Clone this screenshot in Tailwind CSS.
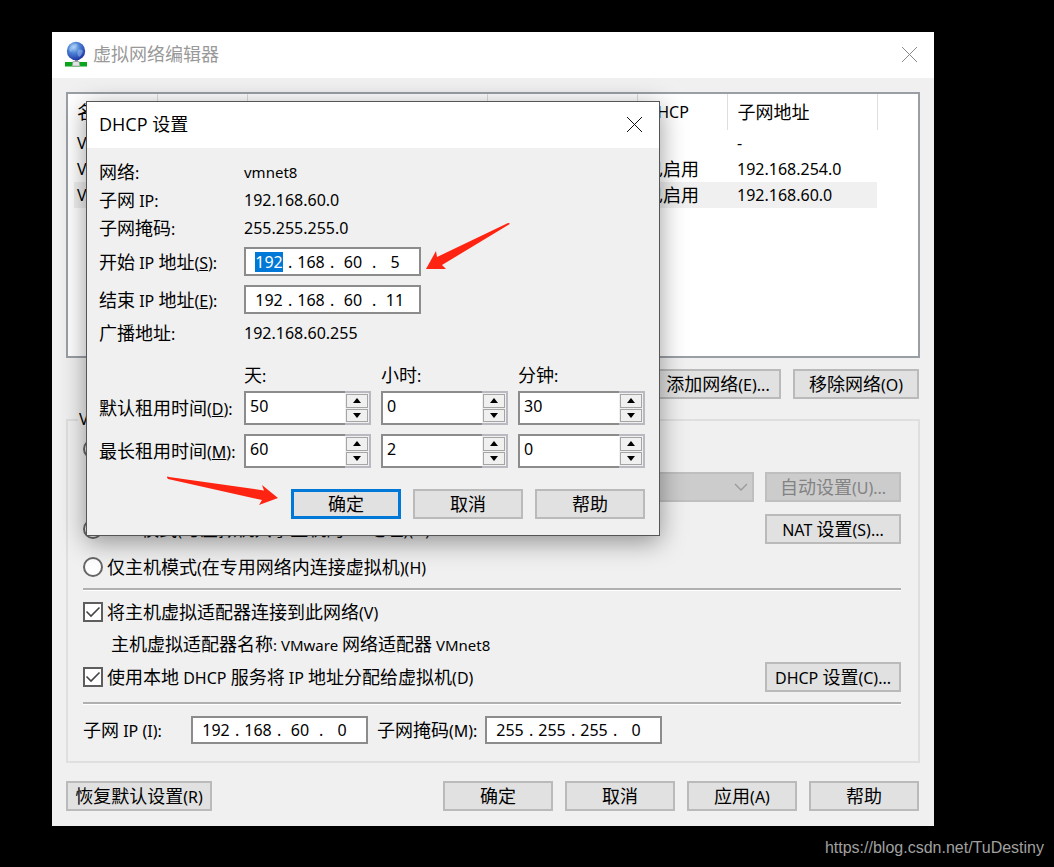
<!DOCTYPE html>
<html lang="zh-CN">
<head>
<meta charset="utf-8">
<meta name="viewport" content="width=device-width, initial-scale=1">
<title>虚拟网络编辑器</title>
<script src="https://cdn.jsdelivr.net/npm/@tailwindcss/browser@4"></script>
</head>
<body class="min-h-screen bg-black font-['Noto_Sans','Noto_Sans_CJK_SC',sans-serif] text-[18px] leading-[26px] text-black">
<div class="relative flex min-h-screen flex-col pt-8">

  <main class="mr-[120px] ml-[52px] bg-[#f0f0f0]">
    <header class="flex h-[46px] items-center bg-white pr-4 pb-0.5 pl-[13px]">
      <svg class="h-[26px] w-[22px]" viewBox="0 0 22 26" aria-hidden="true">
        <defs>
          <radialGradient id="globe" cx="0.38" cy="0.3" r="0.75">
            <stop offset="0" stop-color="#b4d4f6"/><stop offset="0.4" stop-color="#4f86d8"/><stop offset="1" stop-color="#1c2fa0"/>
          </radialGradient>
        </defs>
        <path d="M10 19h3v3h-3z" fill="#8b93a0"/>
        <path d="M0 21h22v4.500H0z" fill="#0aa51c"/>
        <path d="M8 20.500h6l1 4.500H7z" fill="#e3e3e3" stroke="#8d8d8d" stroke-width="0.600"/>
        <circle cx="11" cy="10" r="9.200" fill="url(#globe)"/>
        <path d="M4 8c2-4 5-5 8-5 1 2-1 3-3 4s-2 4-4 4zM13 9c2-1 4 0 5 1-1 3-2 5-4 6-2-2-2-5-1-7z" fill="#a9cbf3" opacity="0.450"/>
      </svg>
      <h1 class="ml-1.5 flex-1 text-[#999]">虚拟网络编辑器</h1>
      <button aria-label="关闭" class="size-[17px]">
        <svg viewBox="0 0 17 17" class="size-[17px]" stroke="#888" fill="none"><path d="M1 1l15 15M16 1L1 16"/></svg>
      </button>
    </header>

    <div class="px-[14px] pt-[14px] pb-[15px]">
      <section class="h-[266px] overflow-hidden border-2 border-[#9a9fa6] bg-white pl-1.5">
        <table class="w-[803px] table-fixed border-collapse text-left whitespace-nowrap">
          <colgroup><col class="w-[83px]"><col class="w-[90px]"><col class="w-[240px]"><col class="w-[150px]"><col class="w-[90px]"><col class="w-[150px]"></colgroup>
          <thead>
            <tr class="h-9">
              <th class="border-r border-[#dedede] p-0 pl-[3px] font-normal">名称</th>
              <th class="border-r border-[#dedede] p-0"></th>
              <th class="border-r border-[#dedede] p-0"></th>
              <th class="border-r border-[#dedede] p-0"></th>
              <th class="border-r border-[#dedede] p-0 pl-2 text-base font-normal">DHCP</th>
              <th class="border-r border-[#dedede] p-0 pl-2.5 font-normal">子网地址</th>
            </tr>
          </thead>
          <tbody>
            <tr class="h-[26px]">
              <td class="p-0 pl-[3px] text-base">VMnet0</td><td></td><td></td><td></td><td></td><td class="p-0 pl-2.5 text-base">-</td>
            </tr>
            <tr class="h-[26px]">
              <td class="p-0 pl-[3px] text-base">VMnet1</td><td></td><td></td><td></td><td class="p-0 pl-2">已启用</td><td class="p-0 pl-2.5 text-base">192.168.254.0</td>
            </tr>
            <tr class="h-[26px] bg-[#f0f0f0]">
              <td class="p-0 pl-[3px] text-base">VMnet8</td><td></td><td></td><td></td><td class="p-0 pl-2">已启用</td><td class="p-0 pl-2.5 text-base">192.168.60.0</td>
            </tr>
          </tbody>
        </table>
      </section>

      <div class="mt-[11px] flex justify-end gap-3 pr-px">
        <button class="h-[30px] w-[126px] border-2 border-[#bababa] bg-[#e1e1e1] whitespace-nowrap">添加网络<span class="text-base leading-6">(E)...</span></button>
        <button class="h-[30px] w-[126px] border-2 border-[#bababa] bg-[#e1e1e1] whitespace-nowrap">移除网络<span class="text-base leading-6">(O)</span></button>
      </div>

      <section class="relative mt-5 border-2 border-[#dfdfdf] pt-3 pr-[17px] pb-[17px] pl-[15px]">
        <h2 class="absolute -top-[14px] left-2.5 bg-[#f0f0f0] px-px text-base">VMnet</h2>

        <div class="flex h-8 items-center">
          <input type="radio" name="mode" aria-label="桥接模式" class="size-5 appearance-none rounded-full border-2 border-[#666] bg-white">
        </div>
        <div class="mt-[7px] flex h-[30px] items-center gap-[11px] pl-[160px]">
          <div class="relative flex-1">
            <select aria-label="已桥接至" disabled class="block h-[30px] w-full appearance-none border-2 border-[#bfbfbf] bg-[#ccc]"></select>
            <svg class="absolute top-[11px] right-1.5 h-2 w-[14px]" viewBox="0 0 14 8" fill="none" stroke="#9a9a9a" stroke-width="1.300"><path d="M1 1l6 6 6-6"/></svg>
          </div>
          <button disabled class="h-[30px] w-[136px] border-2 border-[#bfbfbf] bg-[#ccc] whitespace-nowrap text-[#838383]">自动设置<span class="text-base leading-6">(U)...</span></button>
        </div>
        <div class="mt-3 flex h-[30px] items-center justify-between">
          <label class="flex items-center gap-1 whitespace-nowrap">
            <input type="radio" name="mode" checked class="size-5 appearance-none rounded-full border-2 border-[#666] bg-white">
            <span><span class="text-base leading-6">NAT </span>模式<span class="text-base leading-6">(</span>与虚拟机共享主机的<span class="text-base leading-6"> IP </span>地址<span class="text-base leading-6">)(N)</span></span>
          </label>
          <button class="h-[30px] w-[136px] border-2 border-[#bababa] bg-[#e1e1e1] whitespace-nowrap"><span class="text-base leading-6">NAT </span>设置<span class="text-base leading-6">(S)...</span></button>
        </div>
        <label class="mt-2.5 flex h-[26px] items-center gap-1 whitespace-nowrap">
          <input type="radio" name="mode" class="size-5 appearance-none rounded-full border-2 border-[#666] bg-white">
          <span>仅主机模式<span class="text-base leading-6">(</span>在专用网络内连接虚拟机<span class="text-base leading-6">)(H)</span></span>
        </label>
        <hr class="mt-2 h-[3px] border-t-2 border-b border-t-[#b0b0b0] border-b-white">
        <label class="mt-2 flex h-[26px] items-center whitespace-nowrap">
          <span class="relative mr-1 block size-5">
            <input type="checkbox" checked class="block size-5 appearance-none border-2 border-[#5e5e5e] bg-white">
            <svg class="pointer-events-none absolute inset-0 size-5" viewBox="0 0 20 20" fill="none" stroke="#444" stroke-width="1.600"><path d="M3.500 9.500l4.500 4.500L16.500 5.500"/></svg>
          </span>
          <span>将主机虚拟适配器连接到此网络<span class="text-base leading-6">(V)</span></span>
        </label>
        <p class="mt-1.5 h-[26px] pl-7 whitespace-nowrap">主机虚拟适配器名称<span class="text-[15px] leading-6">: VMware </span>网络适配器<span class="text-[15px] leading-6"> VMnet8</span></p>
        <div class="mt-[5px] flex h-[30px] items-center justify-between">
          <label class="flex items-center whitespace-nowrap">
            <span class="relative mr-1 block size-5">
              <input type="checkbox" checked class="block size-5 appearance-none border-2 border-[#5e5e5e] bg-white">
              <svg class="pointer-events-none absolute inset-0 size-5" viewBox="0 0 20 20" fill="none" stroke="#444" stroke-width="1.600"><path d="M3.500 9.500l4.500 4.500L16.500 5.500"/></svg>
            </span>
            <span>使用本地<span class="text-base leading-6"> DHCP </span>服务将<span class="text-base leading-6"> IP </span>地址分配给虚拟机<span class="text-base leading-6">(D)</span></span>
          </label>
          <button class="h-[30px] w-[136px] border-2 border-[#bababa] bg-[#e1e1e1] whitespace-nowrap"><span class="text-base leading-6">DHCP </span>设置<span class="text-base leading-6">(C)...</span></button>
        </div>
        <hr class="mt-2.5 h-[3px] border-t-2 border-b border-t-[#b0b0b0] border-b-white">
        <div class="mt-[11px] flex h-[28px] items-center whitespace-nowrap">
          <label for="net1" class="w-[108px]">子网<span class="text-base leading-6"> IP (I):</span></label>
          <div class="flex h-[28px] w-[177px] items-center border-2 border-[#8c8c8c] bg-white pl-1 text-base leading-6">
            <input id="net1" value="192" class="w-[38px] text-center"><span class="w-1">.</span><input aria-label="子网 IP 2" value="168" class="w-[38px] text-center"><span class="w-1">.</span><input aria-label="子网 IP 3" value="60" class="w-[38px] text-center"><span class="w-1">.</span><input aria-label="子网 IP 4" value="0" class="w-[38px] text-center">
          </div>
          <label for="mask1" class="ml-[9px] w-[108px]">子网掩码<span class="text-base leading-6">(M):</span></label>
          <div class="flex h-[28px] w-[177px] items-center border-2 border-[#8c8c8c] bg-white pl-1 text-base leading-6">
            <input id="mask1" value="255" class="w-[38px] text-center"><span class="w-1">.</span><input aria-label="子网掩码 2" value="255" class="w-[38px] text-center"><span class="w-1">.</span><input aria-label="子网掩码 3" value="255" class="w-[38px] text-center"><span class="w-1">.</span><input aria-label="子网掩码 4" value="0" class="w-[38px] text-center">
          </div>
        </div>
      </section>

      <footer class="mt-[18px] flex gap-3 pr-px">
        <button class="mr-auto h-[30px] w-[146px] border-2 border-[#bababa] bg-[#e1e1e1] whitespace-nowrap">恢复默认设置<span class="text-base leading-6">(R)</span></button>
        <button class="h-[30px] w-[110px] border-2 border-[#bababa] bg-[#e1e1e1]">确定</button>
        <button class="h-[30px] w-[110px] border-2 border-[#bababa] bg-[#e1e1e1]">取消</button>
        <button class="h-[30px] w-[110px] border-2 border-[#bababa] bg-[#e1e1e1]">应用<span class="text-base leading-6">(A)</span></button>
        <button class="h-[30px] w-[110px] border-2 border-[#bababa] bg-[#e1e1e1]">帮助</button>
      </footer>
    </div>
  </main>

  <div role="dialog" aria-labelledby="dlg" class="absolute top-[101px] left-[86px] w-[574px] border border-[#555] bg-[#f0f0f0] shadow-[0_6px_24px_rgba(0,0,0,0.4)]">
    <header class="flex h-[46px] items-center justify-between bg-white pr-4 pb-0.5 pl-3">
      <h2 id="dlg" class="font-['Open_Sans','Noto_Sans_CJK_SC',sans-serif]">DHCP 设置</h2>
      <button aria-label="关闭" class="size-[17px]">
        <svg viewBox="0 0 17 17" class="size-[17px]" stroke="#111" fill="none"><path d="M1 1l15 15M16 1L1 16"/></svg>
      </button>
    </header>
    <form class="px-3 pt-2.5 pb-4 whitespace-nowrap">
      <dl class="grid auto-rows-[28px] grid-cols-[145px_1fr] leading-[28px]">
        <dt>网络<span class="text-base leading-6">:</span></dt><dd class="text-[15px]">vmnet8</dd>
        <dt>子网<span class="text-base leading-6"> IP:</span></dt><dd class="text-base leading-[28px]">192.168.60.0</dd>
        <dt>子网掩码<span class="text-base leading-6">:</span></dt><dd class="text-base leading-[28px]">255.255.255.0</dd>
      </dl>
      <div class="mt-[5px] flex h-[29px] items-center">
        <label for="start" class="w-[145px]">开始<span class="text-base leading-6"> IP </span>地址<span class="text-base leading-6">(<u>S</u>):</span></label>
        <div class="flex h-[29px] w-[177px] items-center border-2 border-[#8c8c8c] bg-white pl-1 text-base leading-6">
          <input id="start" value="192" class="mx-[5px] h-5 w-[28px] bg-[#0078d7] text-center text-white"><span class="w-1">.</span><input aria-label="开始 IP 2" value="168" class="w-[38px] text-center"><span class="w-1">.</span><input aria-label="开始 IP 3" value="60" class="w-[38px] text-center"><span class="w-1">.</span><input aria-label="开始 IP 4" value="5" class="w-[38px] text-center">
        </div>
      </div>
      <div class="mt-[9px] flex h-[29px] items-center">
        <label for="end" class="w-[145px]">结束<span class="text-base leading-6"> IP </span>地址<span class="text-base leading-6">(<u>E</u>):</span></label>
        <div class="flex h-[29px] w-[177px] items-center border-2 border-[#8c8c8c] bg-white pl-1 text-base leading-6">
          <input id="end" value="192" class="w-[38px] text-center"><span class="w-1">.</span><input aria-label="结束 IP 2" value="168" class="w-[38px] text-center"><span class="w-1">.</span><input aria-label="结束 IP 3" value="60" class="w-[38px] text-center"><span class="w-1">.</span><input aria-label="结束 IP 4" value="11" class="w-[38px] text-center">
        </div>
      </div>
      <dl class="mt-[5px] grid auto-rows-[28px] grid-cols-[145px_1fr] leading-[28px]">
        <dt>广播地址<span class="text-base leading-6">:</span></dt><dd class="text-base leading-[28px]">192.168.60.255</dd>
      </dl>

      <div class="mt-[14px] grid grid-cols-[135px_127px_127px_127px] gap-x-2.5">
        <span class="col-start-2 h-[30px] leading-[28px]">天<span class="text-base leading-6">:</span></span><span class="leading-[28px]">小时<span class="text-base leading-6">:</span></span><span class="leading-[28px]">分钟<span class="text-base leading-6">:</span></span>

        <label for="d1" class="self-center">默认租用时间<span class="text-base leading-6">(<u>D</u>):</span></label>
        <div class="flex h-[34px] text-base"><input id="d1" value="50" class="min-w-0 flex-1 border-2 border-r-0 border-[#8c8c8c] bg-white pb-1 pl-1"><span class="flex w-[26px] flex-col gap-px border-2 border-l-0 border-[#b9b9c2] p-px"><button type="button" aria-label="增加" class="flex flex-1 items-center justify-center border border-[#a5a5a5] bg-[#f0f0f0]"><svg class="h-[5px] w-2" viewBox="0 0 8 5"><path d="M0 5l4-5 4 5z"/></svg></button><button type="button" aria-label="减少" class="flex flex-1 items-center justify-center border border-[#a5a5a5] bg-[#f0f0f0]"><svg class="h-[5px] w-2" viewBox="0 0 8 5"><path d="M0 0l4 5 4-5z"/></svg></button></span></div>
        <div class="flex h-[34px] text-base"><input aria-label="默认 小时" value="0" class="min-w-0 flex-1 border-2 border-r-0 border-[#8c8c8c] bg-white pb-1 pl-1"><span class="flex w-[26px] flex-col gap-px border-2 border-l-0 border-[#b9b9c2] p-px"><button type="button" aria-label="增加" class="flex flex-1 items-center justify-center border border-[#a5a5a5] bg-[#f0f0f0]"><svg class="h-[5px] w-2" viewBox="0 0 8 5"><path d="M0 5l4-5 4 5z"/></svg></button><button type="button" aria-label="减少" class="flex flex-1 items-center justify-center border border-[#a5a5a5] bg-[#f0f0f0]"><svg class="h-[5px] w-2" viewBox="0 0 8 5"><path d="M0 0l4 5 4-5z"/></svg></button></span></div>
        <div class="flex h-[34px] text-base"><input aria-label="默认 分钟" value="30" class="min-w-0 flex-1 border-2 border-r-0 border-[#8c8c8c] bg-white pb-1 pl-1"><span class="flex w-[26px] flex-col gap-px border-2 border-l-0 border-[#b9b9c2] p-px"><button type="button" aria-label="增加" class="flex flex-1 items-center justify-center border border-[#a5a5a5] bg-[#f0f0f0]"><svg class="h-[5px] w-2" viewBox="0 0 8 5"><path d="M0 5l4-5 4 5z"/></svg></button><button type="button" aria-label="减少" class="flex flex-1 items-center justify-center border border-[#a5a5a5] bg-[#f0f0f0]"><svg class="h-[5px] w-2" viewBox="0 0 8 5"><path d="M0 0l4 5 4-5z"/></svg></button></span></div>

        <label for="d2" class="mt-[9px] self-center">最长租用时间<span class="text-base leading-6">(<u>M</u>):</span></label>
        <div class="mt-[9px] flex h-[34px] text-base"><input id="d2" value="60" class="min-w-0 flex-1 border-2 border-r-0 border-[#8c8c8c] bg-white pb-1 pl-1"><span class="flex w-[26px] flex-col gap-px border-2 border-l-0 border-[#b9b9c2] p-px"><button type="button" aria-label="增加" class="flex flex-1 items-center justify-center border border-[#a5a5a5] bg-[#f0f0f0]"><svg class="h-[5px] w-2" viewBox="0 0 8 5"><path d="M0 5l4-5 4 5z"/></svg></button><button type="button" aria-label="减少" class="flex flex-1 items-center justify-center border border-[#a5a5a5] bg-[#f0f0f0]"><svg class="h-[5px] w-2" viewBox="0 0 8 5"><path d="M0 0l4 5 4-5z"/></svg></button></span></div>
        <div class="mt-[9px] flex h-[34px] text-base"><input aria-label="最长 小时" value="2" class="min-w-0 flex-1 border-2 border-r-0 border-[#8c8c8c] bg-white pb-1 pl-1"><span class="flex w-[26px] flex-col gap-px border-2 border-l-0 border-[#b9b9c2] p-px"><button type="button" aria-label="增加" class="flex flex-1 items-center justify-center border border-[#a5a5a5] bg-[#f0f0f0]"><svg class="h-[5px] w-2" viewBox="0 0 8 5"><path d="M0 5l4-5 4 5z"/></svg></button><button type="button" aria-label="减少" class="flex flex-1 items-center justify-center border border-[#a5a5a5] bg-[#f0f0f0]"><svg class="h-[5px] w-2" viewBox="0 0 8 5"><path d="M0 0l4 5 4-5z"/></svg></button></span></div>
        <div class="mt-[9px] flex h-[34px] text-base"><input aria-label="最长 分钟" value="0" class="min-w-0 flex-1 border-2 border-r-0 border-[#8c8c8c] bg-white pb-1 pl-1"><span class="flex w-[26px] flex-col gap-px border-2 border-l-0 border-[#b9b9c2] p-px"><button type="button" aria-label="增加" class="flex flex-1 items-center justify-center border border-[#a5a5a5] bg-[#f0f0f0]"><svg class="h-[5px] w-2" viewBox="0 0 8 5"><path d="M0 5l4-5 4 5z"/></svg></button><button type="button" aria-label="减少" class="flex flex-1 items-center justify-center border border-[#a5a5a5] bg-[#f0f0f0]"><svg class="h-[5px] w-2" viewBox="0 0 8 5"><path d="M0 0l4 5 4-5z"/></svg></button></span></div>
      </div>

      <div class="mt-[21px] flex justify-end gap-3 pr-0.5">
        <button type="button" class="h-[30px] w-[110px] border-[3px] border-[#0078d7] bg-[#e1e1e1] leading-6">确定</button>
        <button type="button" class="h-[30px] w-[110px] border-2 border-[#bababa] bg-[#e1e1e1]">取消</button>
        <button type="button" class="h-[30px] w-[110px] border-2 border-[#bababa] bg-[#e1e1e1]">帮助</button>
      </div>
    </form>
    <!-- Annotation arrows -->
    <svg class="pointer-events-none absolute top-[120px] left-[338px] h-[49px] w-[86px]" viewBox="0 0 86 49" fill="#ff2412" aria-hidden="true"><path d="M83 1Q86 1 84 2.500L17 43l4 4L1 47 11 29l1 6z"/></svg>
    <svg class="pointer-events-none absolute top-[374px] left-[79px] h-[32px] w-[114px]" viewBox="0 0 114 32" fill="#ff2412" aria-hidden="true"><path d="M1 1.500Q1 0 3 1L98 14.500 96 9l16 13-19 7 3-5L2 3z"/></svg>
  </div>

  <p class="mt-auto pr-2.5 pb-[7px] text-right font-['Liberation_Sans',sans-serif] text-base leading-[24px]"><a href="https://blog.csdn.net/TuDestiny" class="text-[#a0a0a0]">https://blog.csdn.net/TuDestiny</a></p>
</div>
</body>
</html>
